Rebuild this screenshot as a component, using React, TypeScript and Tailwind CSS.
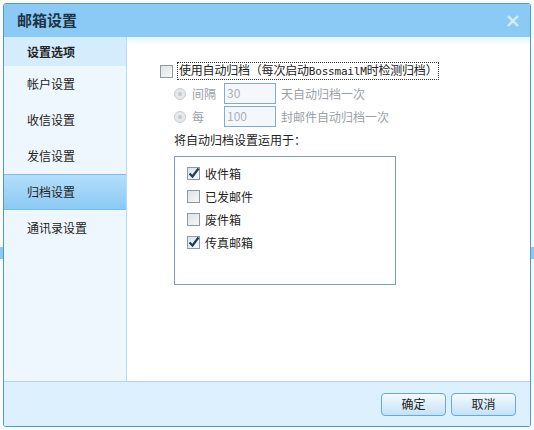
import React from 'react';

const font = { fontFamily: '"Noto Sans CJK SC", "Liberation Sans", sans-serif' };

function Check({ on }: { on?: boolean }) {
  return (
    <span className="relative w-[13px] h-[13px] border border-[#8c9aa6] bg-gradient-to-br from-[#dfe3e7] to-[#f6f7f8] shrink-0">
      {on && (
        <svg className="absolute -left-px -top-[2px]" width="14" height="14" viewBox="0 0 14 14">
          <path d="M2.5 7.5 L5.5 10.5 L11.5 2.5" fill="none" stroke="#1c3d5a" strokeWidth="2.2" />
        </svg>
      )}
    </span>
  );
}

function Radio() {
  return (
    <span className="w-[12px] h-[12px] rounded-full border border-[#c8ccd0] bg-[#e6e8ea] flex items-center justify-center shrink-0">
      <span className="w-[4px] h-[4px] rounded-full bg-[#c4c8cc]" />
    </span>
  );
}

const menu = ['帐户设置', '收信设置', '发信设置', '归档设置', '通讯录设置'];
const boxes: [string, boolean][] = [
  ['收件箱', true],
  ['已发邮件', false],
  ['废件箱', false],
  ['传真邮箱', true],
];

export default function App() {
  return (
    <div className="relative w-[534px] h-[430px] bg-[#fbfcfd] pt-[3px] px-[3px] text-[12px] text-[#222]" style={font}>
      <span className="absolute left-0 top-[247px] w-[3px] h-[12px] bg-[#8cc8f2]" />
      <span className="absolute right-0 top-[247px] w-[3px] h-[12px] bg-[#8cc8f2]" />
      <div className="w-[528px] h-[424px] border border-[#4a9ad4] rounded-[3px] flex flex-col overflow-hidden bg-white">
        <div className="h-[33px] bg-[#8acaf5] flex items-center justify-between pl-[13px] pr-[10px] shrink-0">
          <span className="text-[15px] font-bold text-[#1d3444]">邮箱设置</span>
          <svg width="14" height="14" viewBox="0 0 14 14">
            <path d="M2 2 L12 12 M12 2 L2 12" stroke="#d6ecfb" strokeWidth="2.4" />
          </svg>
        </div>
        <div className="flex flex-1">
          <div className="w-[123px] bg-[#eef7fd] border-r border-[#b5dbf5] flex flex-col">
            <div className="h-[29px] bg-[#d4ecfc] flex items-center pl-[23px] font-bold text-[12px] text-[#222]">设置选项</div>
            {menu.map((m) => (
              <div
                key={m}
                className={
                  'h-[36px] flex items-center pl-[23px] ' +
                  (m === '归档设置' ? 'bg-gradient-to-b from-[#b3defa] to-[#8bcaf4] border-y border-[#7cbfee]' : '')
                }
              >
                {m}
              </div>
            ))}
          </div>
          <div className="flex-1 pl-[33px] pt-[25px] bg-gradient-to-b from-[#e6f3fd] to-white to-[8px]">
            <div className="flex items-center gap-[4px]">
              <Check />
              <span className="border border-dotted border-[#333] px-px leading-[14px] tracking-[-0.2px]">
                使用自动归档（每次启动<span className="text-[11px] font-['DejaVu_Sans_Mono']">BossmailM</span>时检测归档）
              </span>
            </div>
            <div className="flex flex-col gap-[2px] mt-[3px] ml-[14px] text-[#9aa0a6]">
              <div className="flex items-center">
                <Radio />
                <span className="ml-[6px] w-[32px]">间隔</span>
                <span className="w-[52px] h-[21px] border border-[#7aaed8] bg-[#f4f8fc] text-[#a8b0b8] pl-[2px] leading-[18px]">30</span>
                <span className="ml-[5px]">天自动归档一次</span>
              </div>
              <div className="flex items-center">
                <Radio />
                <span className="ml-[6px] w-[32px]">每</span>
                <span className="w-[52px] h-[21px] border border-[#7aaed8] bg-[#f4f8fc] text-[#a8b0b8] pl-[2px] leading-[18px]">100</span>
                <span className="ml-[5px]">封邮件自动归档一次</span>
              </div>
            </div>
            <div className="mt-[4px] ml-[14px]">将自动归档设置运用于：</div>
            <div className="mt-[7px] ml-[14px] w-[222px] h-[129px] border border-[#7f9db9] pt-[10px] pl-[12px] flex flex-col gap-[10px]">
              {boxes.map(([t, on]) => (
                <div key={t} className="flex items-center gap-[5px] h-[13px]">
                  <Check on={on} />
                  <span>{t}</span>
                </div>
              ))}
            </div>
          </div>
        </div>
        <div className="h-[45px] bg-[#dcf0fd] border-t border-[#a9d6f5] flex items-center justify-end gap-[5px] pr-[14px] shrink-0">
          <button className="w-[65px] h-[23px] rounded-[4px] border border-[#6aa8d8] bg-gradient-to-b from-[#f4fafe] to-[#c3e2f7] text-[12px] text-[#222]">确定</button>
          <button className="w-[65px] h-[23px] rounded-[4px] border border-[#6aa8d8] bg-gradient-to-b from-[#f4fafe] to-[#c3e2f7] text-[12px] text-[#222]">取消</button>
        </div>
      </div>
    </div>
  );
}
